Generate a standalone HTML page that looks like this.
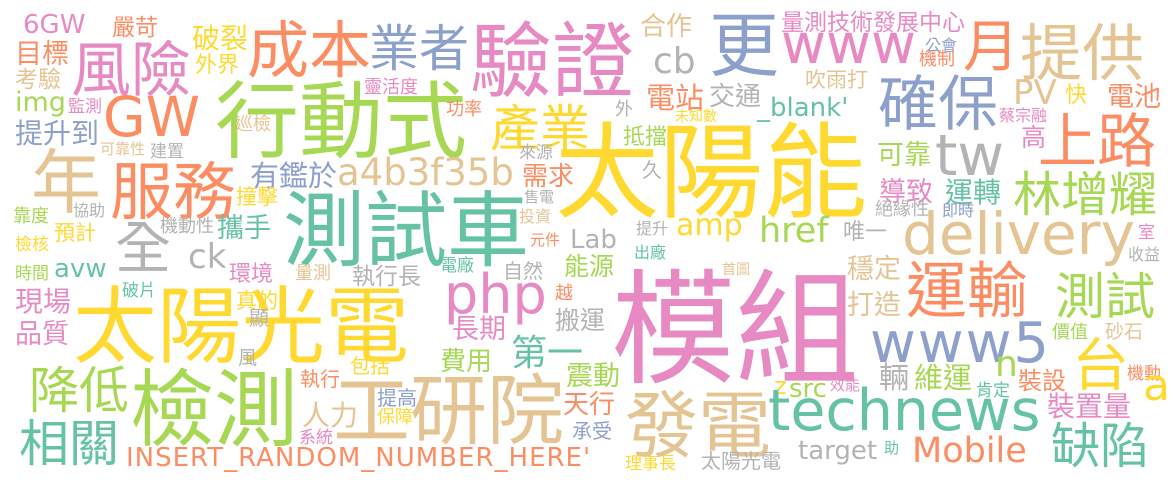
<!DOCTYPE html>
<html><head><meta charset="utf-8"><style>
html,body{margin:0;padding:0;background:#fff;}
#c{position:relative;width:1175px;height:482px;overflow:hidden;background:#fff;}
#c span{position:absolute;line-height:1;white-space:nowrap;}
.c{font-family:"Noto Sans CJK TC","WenQuanYi Zen Hei",sans-serif;}
.l{font-family:"DejaVu Sans","Liberation Sans",sans-serif;}
.G{color:#66c2a5}.O{color:#fc8d62}.B{color:#8da0cb}.P{color:#e78ac3}.L{color:#a6d854}.Y{color:#ffd92f}.T{color:#e5c494}.A{color:#b3b3b3}
</style></head><body><div id="c">
<span class="c O" style="left:112px;top:14px;font-size:23px">嚴苛</span>
<span class="c Y" style="left:192px;top:23px;font-size:28px">破裂</span>
<span class="c Y" style="left:195px;top:52px;font-size:22px">外界</span>
<span class="c O" style="left:247px;top:14px;font-size:62px">成本</span>
<span class="c O" style="left:15px;top:38px;font-size:27px">目標</span>
<span class="c P" style="left:71px;top:36px;font-size:60px">風險</span>
<span class="c B" style="left:369px;top:20px;font-size:50px">業者</span>
<span class="c P" style="left:470px;top:14px;font-size:82px">驗證</span>
<span class="c T" style="left:15px;top:66px;font-size:23px">考驗</span>
<span class="c P" style="left:364px;top:77px;font-size:18px">靈活度</span>
<span class="c P" style="left:68px;top:96px;font-size:17px">監測</span>
<span class="c L" style="left:215px;top:74px;font-size:84px">行動式</span>
<span class="c O" style="left:446px;top:99px;font-size:18px">功率</span>
<span class="c Y" style="left:490px;top:100px;font-size:50px">產業</span>
<span class="c T" style="left:235px;top:114px;font-size:18px">巡檢</span>
<span class="c B" style="left:15px;top:118px;font-size:28px">提升到</span>
<span class="c T" style="left:100px;top:141px;font-size:15px">可靠性</span>
<span class="c A" style="left:150px;top:141px;font-size:17px">建置</span>
<span class="c A" style="left:519px;top:142px;font-size:17px">來源</span>
<span class="c T" style="left:31px;top:143px;font-size:70px">年</span>
<span class="c O" style="left:110px;top:156px;font-size:63px">服務</span>
<span class="c B" style="left:250px;top:160px;font-size:29px">有鑑於</span>
<span class="c O" style="left:522px;top:162px;font-size:26px">需求</span>
<span class="c Y" style="left:236px;top:186px;font-size:21px">撞擊</span>
<span class="c A" style="left:73px;top:201px;font-size:16px">協助</span>
<span class="c L" style="left:13px;top:206px;font-size:18px">靠度</span>
<span class="c Y" style="left:54px;top:222px;font-size:21px">預計</span>
<span class="c A" style="left:160px;top:216px;font-size:18px">機動性</span>
<span class="c G" style="left:217px;top:212px;font-size:27px">攜手</span>
<span class="c G" style="left:283px;top:183px;font-size:82px">測試車</span>
<span class="c A" style="left:524px;top:189px;font-size:15px">售電</span>
<span class="c T" style="left:519px;top:207px;font-size:16px">投資</span>
<span class="c O" style="left:530px;top:232px;font-size:15px">元件</span>
<span class="c A" style="left:115px;top:217px;font-size:56px">全</span>
<span class="c Y" style="left:15px;top:234px;font-size:17px">檢核</span>
<span class="c L" style="left:15px;top:263px;font-size:17px">時間</span>
<span class="c P" style="left:229px;top:261px;font-size:22px">環境</span>
<span class="c T" style="left:295px;top:263px;font-size:18px">量測</span>
<span class="c A" style="left:352px;top:263px;font-size:23px">執行長</span>
<span class="c G" style="left:440px;top:255px;font-size:17px">電廠</span>
<span class="c A" style="left:503px;top:260px;font-size:20px">自然</span>
<span class="c L" style="left:564px;top:253px;font-size:25px">能源</span>
<span class="c G" style="left:122px;top:280px;font-size:17px">破片</span>
<span class="c P" style="left:15px;top:286px;font-size:28px">現場</span>
<span class="c Y" style="left:73px;top:279px;font-size:84px">太陽光電</span>
<span class="c Y" style="left:236px;top:290px;font-size:21px">真的</span>
<span class="c O" style="left:555px;top:283px;font-size:18px">越</span>
<span class="c A" style="left:555px;top:307px;font-size:25px">搬運</span>
<span class="c A" style="left:249px;top:307px;font-size:20px">顯</span>
<span class="c P" style="left:452px;top:313px;font-size:27px">長期</span>
<span class="c P" style="left:15px;top:318px;font-size:27px">品質</span>
<span class="c G" style="left:511px;top:332px;font-size:36px">第一</span>
<span class="c L" style="left:440px;top:347px;font-size:26px">費用</span>
<span class="c A" style="left:238px;top:347px;font-size:19px">風</span>
<span class="c Y" style="left:350px;top:355px;font-size:20px">包括</span>
<span class="c L" style="left:566px;top:360px;font-size:27px">震動</span>
<span class="c L" style="left:29px;top:362px;font-size:50px">降低</span>
<span class="c L" style="left:130px;top:362px;font-size:84px">檢測</span>
<span class="c O" style="left:300px;top:368px;font-size:20px">執行</span>
<span class="c T" style="left:333px;top:367px;font-size:77px">工研院</span>
<span class="c T" style="left:302px;top:400px;font-size:28px">人力</span>
<span class="c B" style="left:377px;top:387px;font-size:20px">提高</span>
<span class="c O" style="left:563px;top:390px;font-size:26px">天行</span>
<span class="c Y" style="left:377px;top:407px;font-size:18px">保障</span>
<span class="c G" style="left:19px;top:415px;font-size:50px">相關</span>
<span class="c P" style="left:299px;top:427px;font-size:17px">系統</span>
<span class="c B" style="left:572px;top:420px;font-size:20px">承受</span>
<span class="c T" style="left:640px;top:12px;font-size:26px">合作</span>
<span class="c B" style="left:709px;top:6px;font-size:70px">更</span>
<span class="c P" style="left:781px;top:9px;font-size:23px">量測技術發展中心</span>
<span class="c B" style="left:925px;top:36px;font-size:16px">公會</span>
<span class="c O" style="left:919px;top:49px;font-size:18px">機制</span>
<span class="c O" style="left:963px;top:15px;font-size:56px">月</span>
<span class="c T" style="left:1020px;top:17px;font-size:62px">提供</span>
<span class="c T" style="left:805px;top:69px;font-size:21px">吹雨打</span>
<span class="c O" style="left:646px;top:82px;font-size:29px">電站</span>
<span class="c A" style="left:709px;top:82px;font-size:26px">交通</span>
<span class="c B" style="left:878px;top:70px;font-size:60px">確保</span>
<span class="c Y" style="left:1065px;top:82px;font-size:22px">快</span>
<span class="c O" style="left:1107px;top:81px;font-size:27px">電池</span>
<span class="c A" style="left:615px;top:99px;font-size:18px">外</span>
<span class="c Y" style="left:675px;top:109px;font-size:14px">未知數</span>
<span class="c P" style="left:999px;top:106px;font-size:16px">蔡宗融</span>
<span class="c O" style="left:1038px;top:107px;font-size:59px">上路</span>
<span class="c Y" style="left:555px;top:112px;font-size:104px">太陽能</span>
<span class="c L" style="left:623px;top:124px;font-size:22px">抵擋</span>
<span class="c P" style="left:1021px;top:124px;font-size:25px">高</span>
<span class="c L" style="left:877px;top:139px;font-size:27px">可靠</span>
<span class="c A" style="left:642px;top:159px;font-size:20px">久</span>
<span class="c P" style="left:879px;top:176px;font-size:27px">導致</span>
<span class="c G" style="left:945px;top:177px;font-size:28px">運轉</span>
<span class="c L" style="left:1013px;top:166px;font-size:48px">林增耀</span>
<span class="c A" style="left:875px;top:199px;font-size:18px">絕緣性</span>
<span class="c B" style="left:942px;top:201px;font-size:16px">即時</span>
<span class="c P" style="left:1138px;top:222px;font-size:17px">室</span>
<span class="c A" style="left:636px;top:219px;font-size:16px">提升</span>
<span class="c A" style="left:843px;top:219px;font-size:22px">唯一</span>
<span class="c G" style="left:634px;top:243px;font-size:16px">出廠</span>
<span class="c T" style="left:722px;top:262px;font-size:14px">首圖</span>
<span class="c A" style="left:1128px;top:245px;font-size:16px">收益</span>
<span class="c T" style="left:847px;top:253px;font-size:27px">穩定</span>
<span class="c O" style="left:906px;top:255px;font-size:61px">運輸</span>
<span class="c L" style="left:1055px;top:268px;font-size:50px">測試</span>
<span class="c P" style="left:611px;top:257px;font-size:124px">模組</span>
<span class="c T" style="left:847px;top:289px;font-size:27px">打造</span>
<span class="c L" style="left:1052px;top:322px;font-size:18px">價值</span>
<span class="c T" style="left:1105px;top:321px;font-size:19px">砂石</span>
<span class="c Y" style="left:1072px;top:333px;font-size:57px">台</span>
<span class="c A" style="left:879px;top:360px;font-size:30px">輛</span>
<span class="c L" style="left:914px;top:362px;font-size:29px">維運</span>
<span class="c O" style="left:1018px;top:367px;font-size:24px">裝設</span>
<span class="c O" style="left:1127px;top:363px;font-size:17px">機動</span>
<span class="c P" style="left:830px;top:377px;font-size:15px">效能</span>
<span class="c G" style="left:976px;top:380px;font-size:17px">肯定</span>
<span class="c T" style="left:625px;top:384px;font-size:73px">發電</span>
<span class="c P" style="left:1047px;top:391px;font-size:28px">裝置量</span>
<span class="c G" style="left:1051px;top:418px;font-size:49px">缺陷</span>
<span class="c G" style="left:884px;top:440px;font-size:15px">助</span>
<span class="c Y" style="left:625px;top:453px;font-size:17px">理事長</span>
<span class="c A" style="left:701px;top:450px;font-size:20px">太陽光電</span>

<span class="l P" style="left:23px;top:12px;font-size:26px">6GW</span>
<span class="l L" style="left:15px;top:89px;font-size:27px">img</span>
<span class="l O" style="left:103px;top:90px;font-size:55px">GW</span>
<span class="l T" style="left:337px;top:154px;font-size:37px">a4b3f35b</span>
<span class="l A" style="left:188px;top:240px;font-size:34px">ck</span>
<span class="l G" style="left:54px;top:256px;font-size:26px">avw</span>
<span class="l P" style="left:444px;top:268px;font-size:54px">php</span>
<span class="l A" style="left:653px;top:44px;font-size:36px">cb</span>
<span class="l P" style="left:781px;top:17px;font-size:55px">www</span>
<span class="l T" style="left:1013px;top:76px;font-size:34px">PV</span>
<span class="l G" style="left:757px;top:95px;font-size:26px">_blank'</span>
<span class="l A" style="left:935px;top:128px;font-size:57px">tw</span>
<span class="l T" style="left:902px;top:205px;font-size:58px">delivery</span>
<span class="l Y" style="left:676px;top:211px;font-size:30px">amp</span>
<span class="l L" style="left:759px;top:214px;font-size:35px">href</span>
<span class="l A" style="left:570px;top:227px;font-size:26px">Lab</span>
<span class="l B" style="left:870px;top:316px;font-size:56px;letter-spacing:2px">www5</span>
<span class="l L" style="left:995px;top:347px;font-size:36px">n</span>
<span class="l Y" style="left:1143px;top:364px;font-size:44px">a</span>
<span class="l Y" style="left:774px;top:374px;font-size:24px">z</span>
<span class="l L" style="left:789px;top:376px;font-size:26px">src</span>
<span class="l G" style="left:768px;top:383px;font-size:57px">technews</span>
<span class="l A" style="left:798px;top:438px;font-size:26px">target</span>
<span class="l O" style="left:912px;top:434px;font-size:35px">Mobile</span>
<span class="l O" style="left:126px;top:445px;font-size:26px;letter-spacing:1px">INSERT_RANDOM_NUMBER_HERE'</span>
</div></body></html>
